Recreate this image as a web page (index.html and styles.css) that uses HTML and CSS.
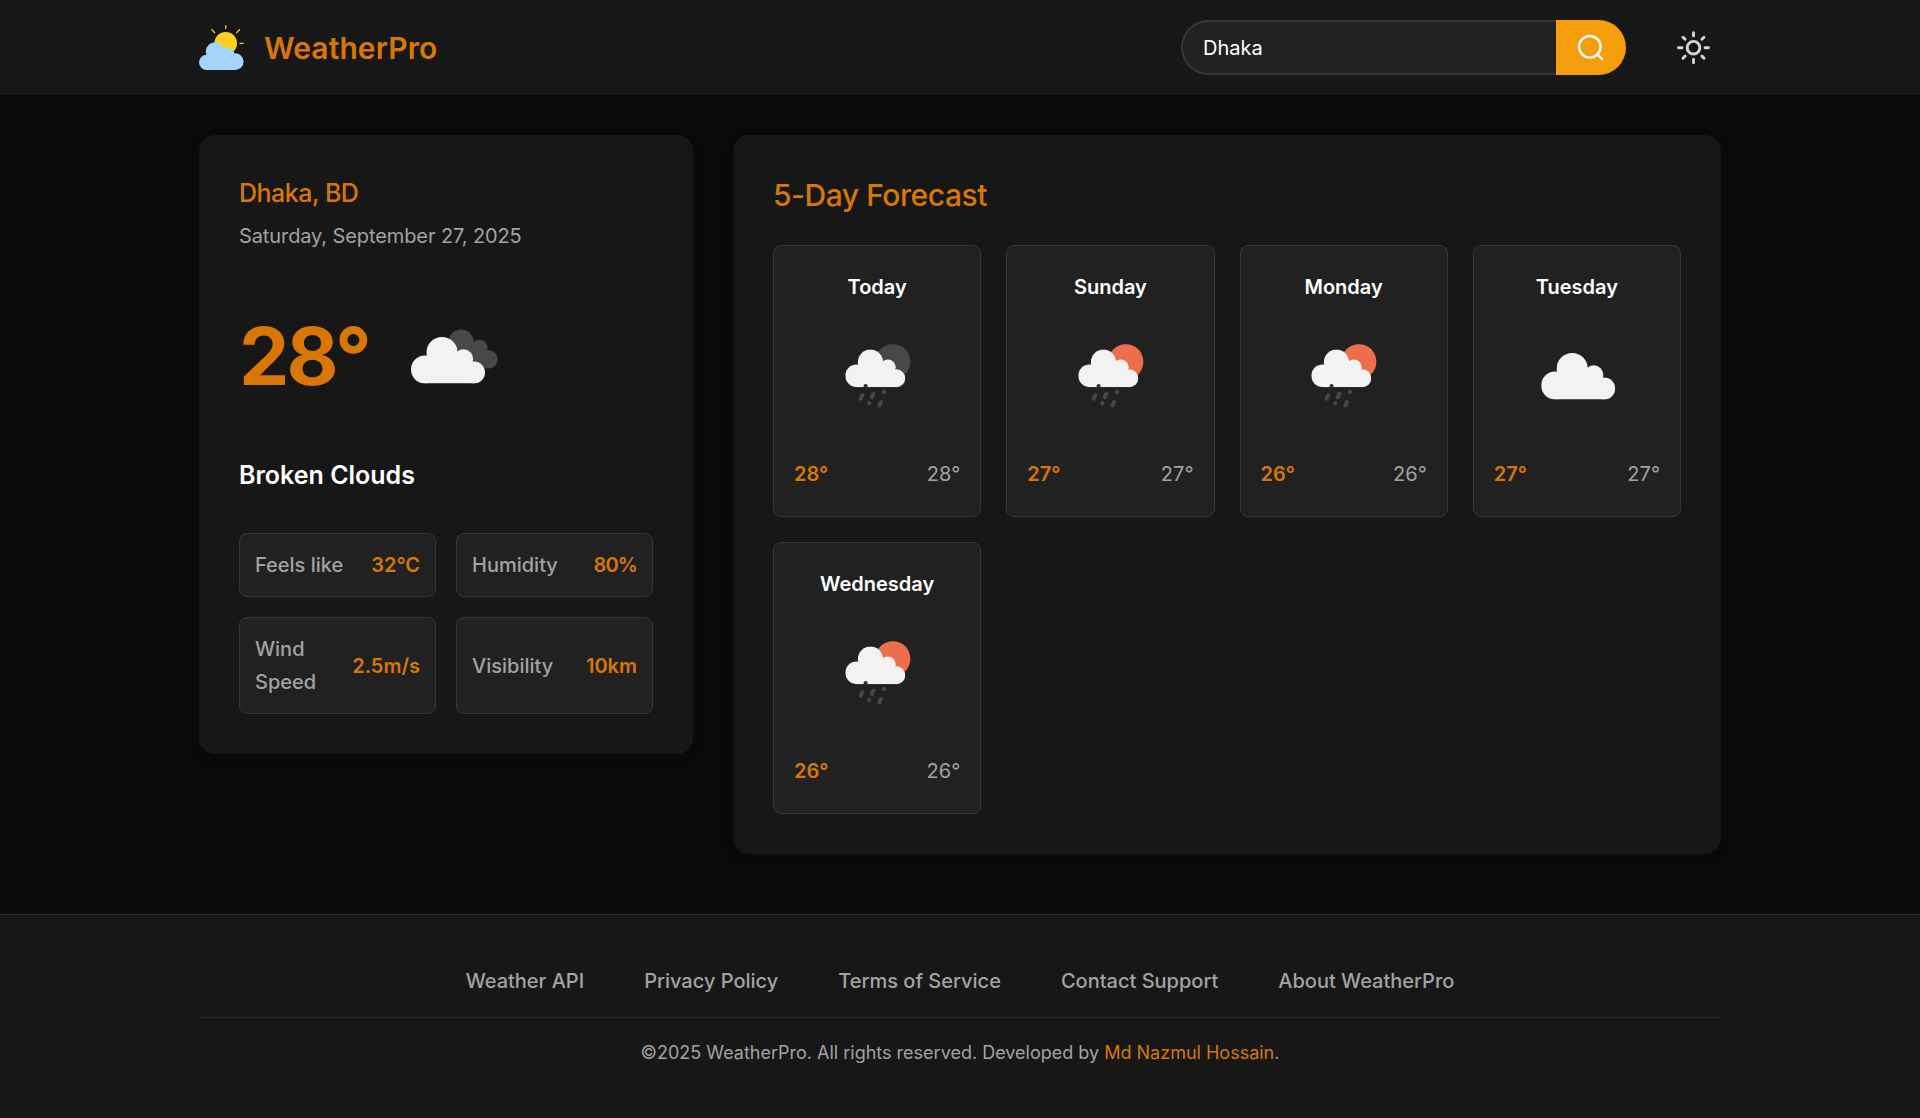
FILE: index.html
```html
<!DOCTYPE html>
<html lang="en">
<head>
<meta charset="utf-8">
<title>WeatherPro</title>
<link rel="stylesheet" href="styles.css">
</head>
<body>
<svg class="defs" width="0" height="0" aria-hidden="true">
  <symbol id="cloud" viewBox="0 0 74 46.5">
    <circle cx="14" cy="32.5" r="14"/><circle cx="31" cy="15.5" r="15.5"/><circle cx="52.5" cy="22" r="9.7"/><circle cx="63" cy="35.5" r="11"/><path d="M14 20h38l12 14v12.5H14z"/>
  </symbol>
  <symbol id="rain" viewBox="0 0 100 100">
    <circle class="disc" cx="65.9" cy="36.7" r="17.5"/>
    <use href="#cloud" x="18.3" y="24.3" width="60" height="38" fill="#f2f2f2"/>
    <circle cx="38.6" cy="61" r="2.1" fill="#303031"/>
    <g stroke="#484849" stroke-width="4" stroke-linecap="round">
      <path d="M35.2 70.3l-1.5 3.4M46.4 68.5l-1.6 3.6M57.1 66.7l-.3.4M42.4 78l-.2.3M54 77.1l-1.5 3.4"/>
    </g>
  </symbol>
</svg>
<header class="header">
  <div class="container header-inner">
    <div class="logo">
      <svg width="45" height="45" viewBox="0 0 45 45">
        <circle cx="26.7" cy="18.3" r="11.3" fill="#fdd020"/>
        <path d="M26.7.3V4M12.5 4.3l3.5 3.8M41 4.3l-3.7 3.8M40.5 18.3h4.2" stroke="#fdd020" stroke-width="1.3"/>
        <g fill="#a4d4f9"><circle cx="7.6" cy="37.3" r="7.6"/><circle cx="16" cy="26.6" r="9.3"/><circle cx="28.5" cy="29.7" r="7"/><circle cx="36.2" cy="36.6" r="8.4"/><path d="M8 30h28v15H7.6z"/></g>
      </svg>
      <span class="logo-text">WeatherPro</span>
    </div>
    <div class="tools">
      <div class="search">
        <input class="search-input" type="text" value="Dhaka">
        <button class="search-button" aria-label="Search">
          <svg width="28" height="28" viewBox="0 0 28 28" fill="none" stroke="#fff" stroke-width="2.4" stroke-linecap="round"><circle cx="12.8" cy="12.8" r="10.8"/><path d="M20.5 20.5l4.7 4.7"/></svg>
        </button>
      </div>
      <button class="theme" aria-label="Toggle theme">
        <svg width="34" height="34" viewBox="0 0 34 34" fill="none" stroke="#d1d5db" stroke-width="2.9" stroke-linecap="round"><circle cx="16.5" cy="16.7" r="6.3"/><path d="M16.5 1.7v3.2M16.5 28.5v3.2M1.5 16.7h3.5M28 16.7h3.5M6 6.2l2.1 2.1M24.9 25.1l2.1 2.1M27 6.2l-2.1 2.1M8.1 25.1l-2.1 2.1"/></svg>
      </button>
    </div>
  </div>
</header>
<main class="container main">
  <section class="card current">
    <h2 class="place">Dhaka, BD</h2>
    <p class="date">Saturday, September 27, 2025</p>
    <div class="now">
      <span class="temp">28°</span>
      <svg width="100" height="100" viewBox="0 0 100 100">
        <g fill="#484849"><circle cx="57" cy="29.2" r="12.7"/><circle cx="75.5" cy="34.7" r="7.9"/><circle cx="84.5" cy="46.3" r="9.2"/><path d="M57 26l18 5 8 22-20-4z"/></g>
        <use href="#cloud" x="7" y="24" width="74" height="46.5" fill="#f2f2f0"/>
      </svg>
    </div>
    <p class="condition">Broken Clouds</p>
    <div class="details">
      <div class="detail"><span>Feels like</span><b>32°C</b></div>
      <div class="detail"><span>Humidity</span><b class="tight">80%</b></div>
      <div class="detail"><span>Wind Speed</span><b>2.5m/s</b></div>
      <div class="detail"><span>Visibility</span><b>10km</b></div>
    </div>
  </section>
  <section class="card">
    <h2 class="forecast-title">5-Day Forecast</h2>
    <div class="forecast">
      <article class="day"><h3>Today</h3><svg class="night" width="100" height="100"><use href="#rain"/></svg><div class="range"><b>28°</b><span>28°</span></div></article>
      <article class="day"><h3>Sunday</h3><svg class="sunny" width="100" height="100"><use href="#rain"/></svg><div class="range"><b>27°</b><span>27°</span></div></article>
      <article class="day"><h3>Monday</h3><svg class="sunny" width="100" height="100"><use href="#rain"/></svg><div class="range"><b>26°</b><span>26°</span></div></article>
      <article class="day"><h3>Tuesday</h3><svg width="100" height="100"><use href="#cloud" x="15.2" y="28" width="74" height="46.5" fill="#f2f2f0"/></svg><div class="range"><b>27°</b><span>27°</span></div></article>
      <article class="day"><h3>Wednesday</h3><svg class="sunny" width="100" height="100"><use href="#rain"/></svg><div class="range"><b>26°</b><span>26°</span></div></article>
    </div>
  </section>
</main>
<footer class="footer">
  <div class="container">
    <nav class="links"><a>Weather API</a><a>Privacy Policy</a><a>Terms of Service</a><a>Contact Support</a><a>About WeatherPro</a></nav>
    <p class="copyright">©2025 WeatherPro. All rights reserved. Developed by <a>Md Nazmul Hossain</a>.</p>
  </div>
</footer>
</body>
</html>
```
FILE: styles.css
```css
* { box-sizing: border-box; margin: 0; padding: 0; }
body { background: #0a0a0a; color: #fff; font: 400 20px/33px Inter, sans-serif; min-height: 1118px; display: flex; flex-direction: column; }
svg { display: block; flex: none; }
.defs { position: absolute; }
.container { width: 1522px; margin: 0 auto; }
.header { background: #171717; height: 95px; box-shadow: 0 1px 4px rgba(0, 0, 0, .15); }
.header-inner { display: flex; align-items: center; justify-content: space-between; height: 95px; }
.logo { display: flex; align-items: center; gap: 20px; }
.logo-text { font-size: 30px; font-weight: 600; color: #d97706; letter-spacing: .1px; padding-top: 2px; }
.tools { display: flex; align-items: center; gap: 40px; }
.search { display: flex; height: 55px; width: 445px; }
.search-input { flex: 1; min-width: 0; background: #212121; border: 2px solid #373737; border-right: 0; border-radius: 28px 0 0 28px; padding: 0 20px; color: #fff; font: 400 20px Inter, sans-serif; outline: none; }
.search-button { width: 70px; border: 0; border-radius: 0 28px 28px 0; background: #f59e0b; display: grid; place-items: center; }
.theme { width: 55px; height: 55px; border: 0; background: none; display: grid; place-items: center; }
.main { display: grid; grid-template-columns: 1fr 2fr; gap: 40px; align-items: start; padding-top: 40px; flex: 1; }
.card { background: #171717; border-radius: 16px; padding: 40px; box-shadow: 0 4px 12px rgba(0, 0, 0, .15); }
.place { font-size: 25px; font-weight: 500; line-height: 37px; letter-spacing: -.5px; color: #d97706; }
.date { color: #a3a3a3; margin-top: 6px; line-height: 36px; letter-spacing: -.1px; }
.now { display: flex; align-items: center; gap: 35px; height: 100px; margin-top: 59px; }
.temp { font-size: 80px; font-weight: 700; line-height: 100px; letter-spacing: -2.9px; color: #d97706; padding-bottom: 14px; }
.condition { font-size: 25px; font-weight: 600; line-height: 40px; margin-top: 42px; }
.details { display: grid; grid-template-columns: 1fr 1fr; gap: 20px; margin-top: 38px; }
.detail { display: flex; align-items: center; justify-content: space-between; gap: 10px; background: #212121; border: 1px solid #373737; border-radius: 8px; padding: 15px 15px 14px; color: #a3a3a3; font-weight: 500; }
.detail b, .range b { font-weight: 600; color: #d97706; }
.detail .tight { letter-spacing: -.9px; }
.forecast-title { font-size: 30px; font-weight: 500; line-height: 40px; letter-spacing: -.45px; color: #d97706; margin-bottom: 30px; }
.forecast { display: grid; grid-template-columns: repeat(4, 1fr); gap: 25px; }
.day { background: #212121; border: 1px solid #373737; border-radius: 8px; height: 272px; padding: 24px 20px; display: flex; flex-direction: column; align-items: center; }
.day h3 { font-size: 20px; font-weight: 600; line-height: 34px; margin-bottom: 21px; }
.day svg { margin-right: 1px; }
.night { fill: #484849; }
.sunny { fill: #ec6e4c; }
.range { display: flex; justify-content: space-between; width: 100%; margin-top: 32px; color: #a3a3a3; line-height: 34px; }
.footer { background: #171717; border-top: 1px solid #2e2e2e; height: 204px; padding-top: 50px; }
.links { display: flex; justify-content: center; gap: 60px; color: #a3a3a3; font-weight: 500; height: 53px; border-bottom: 1px solid #2e2e2e; }
.copyright { text-align: center; margin-top: 18px; font-size: 18px; color: #a3a3a3; }
.copyright a { color: #d97706; }
```
